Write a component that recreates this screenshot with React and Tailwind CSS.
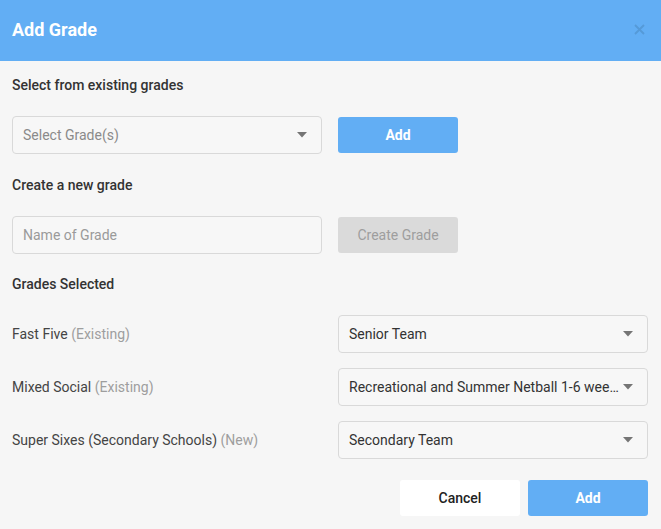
import React from "react";

const Arrow = () => (
  <svg width="10" height="6" viewBox="0 0 10 6" className="shrink-0">
    <path d="M0 0 L10 0 L5 5.5 Z" fill="#757575" />
  </svg>
);

function SelectBox({ value, placeholder, className = "" }) {
  return (
    <div
      className={`flex h-[38px] items-center justify-between rounded-[4px] border border-[#d9d9d9] bg-[#f7f7f7] pl-[10px] pr-[14px] ${className}`}
    >
      <span
        className={`truncate text-[14px] ${placeholder ? "text-[#8a8a8a]" : "text-[#333]"}`}
      >
        {value || placeholder}
      </span>
      <span className="ml-[4px]">
        <Arrow />
      </span>
    </div>
  );
}

function Row({ name, tag, value }) {
  return (
    <div className="flex items-center">
      <div className="w-[326px] text-[14px] leading-[20px] text-[#444]">
        {name} <span className="text-[#9e9e9e]">({tag})</span>
      </div>
      <SelectBox value={value} className="w-[310px]" />
    </div>
  );
}

export default function App() {
  return (
    <div
      className="flex h-[529px] w-[661px] flex-col bg-[#f6f6f6]"
      style={{ fontFamily: "Roboto, 'Liberation Sans', sans-serif" }}
    >
      <div className="flex h-[61px] items-center justify-between bg-[#62aef4] pb-[2px] pl-[12px] pr-[16px]">
        <h1 className="text-[18px] font-bold text-white">Add Grade</h1>
        <svg width="11" height="11" viewBox="0 0 11 11">
          <path d="M1 1 L10 10 M10 1 L1 10" stroke="#559ad8" strokeWidth="1.8" />
        </svg>
      </div>
      <div className="flex flex-col px-[12px]">
        <div className="mt-[14px] text-[14px] leading-[20px] font-medium text-[#333]">Select from existing grades</div>
        <div className="mt-[21px] flex items-center">
          <SelectBox placeholder="Select Grade(s)" className="w-[310px]" />
          <button className="ml-[16px] flex h-[36px] w-[120px] items-center justify-center rounded-[3px] bg-[#62aef4] text-[14px] font-bold text-white">
            Add
          </button>
        </div>
        <div className="mt-[21px] text-[14px] leading-[20px] font-medium text-[#333]">Create a new grade</div>
        <div className="mt-[21px] flex items-center">
          <div className="flex h-[38px] w-[310px] items-center rounded-[4px] border border-[#d9d9d9] bg-[#f7f7f7] pl-[10px] text-[14px] text-[#9a9a9a]">
            Name of Grade
          </div>
          <button className="ml-[16px] flex h-[36px] w-[120px] items-center justify-center rounded-[3px] bg-[#dadada] text-[14px] text-[#9e9e9e]">
            Create Grade
          </button>
        </div>
        <div className="mt-[20px] text-[14px] leading-[20px] font-medium text-[#333]">Grades Selected</div>
        <div className="mt-[21px] flex flex-col gap-[15px]">
          <Row name="Fast Five" tag="Existing" value="Senior Team" />
          <Row name="Mixed Social" tag="Existing" value="Recreational and Summer Netball 1-6 weeks" />
          <Row name="Super Sixes (Secondary Schools)" tag="New" value="Secondary Team" />
        </div>
        <div className="mt-[21px] flex justify-end gap-[8px] pr-[1px]">
          <button className="flex h-[36px] w-[120px] items-center justify-center rounded-[3px] bg-white text-[14px] font-medium text-[#222]">
            Cancel
          </button>
          <button className="flex h-[36px] w-[120px] items-center justify-center rounded-[3px] bg-[#62aef4] text-[14px] font-bold text-white">
            Add
          </button>
        </div>
      </div>
    </div>
  );
}
